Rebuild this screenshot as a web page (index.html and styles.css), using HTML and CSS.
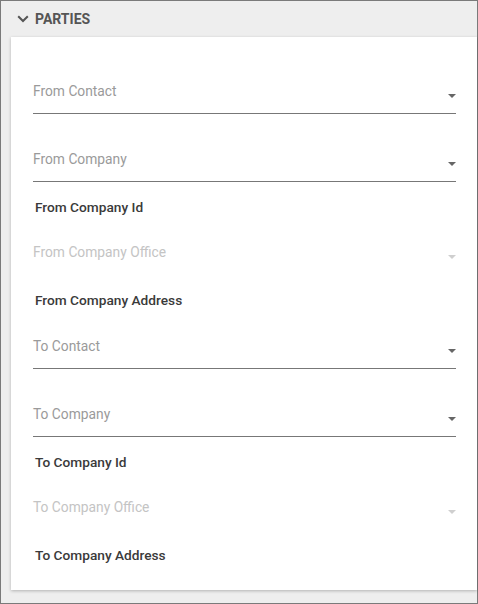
FILE: index.html
```html
<!DOCTYPE html>
<html>
<head>
<meta charset="utf-8">
<link rel="stylesheet" href="styles.css">
</head>
<body>
<div class="frame">
  <div class="header">
    <svg class="chev" width="12" height="8" viewBox="0 0 12 8"><path d="M1.2 1.2 L6 6 L10.8 1.2" fill="none" stroke="#555" stroke-width="2"/></svg>
    <span class="title">PARTIES</span>
  </div>
  <div class="card">
    <div class="group">
      <div class="field"><span class="label">From Contact</span><span class="arrow"></span></div>
      <div class="field"><span class="label">From Company</span><span class="arrow"></span></div>
      <div class="static">From Company Id</div>
      <div class="field disabled"><span class="label">From Company Office</span><span class="arrow"></span></div>
      <div class="static">From Company Address</div>
    </div>
    <div class="group">
      <div class="field"><span class="label">To Contact</span><span class="arrow"></span></div>
      <div class="field"><span class="label">To Company</span><span class="arrow"></span></div>
      <div class="static">To Company Id</div>
      <div class="field disabled"><span class="label">To Company Office</span><span class="arrow"></span></div>
      <div class="static">To Company Address</div>
    </div>
  </div>
</div>
</body>
</html>
```
FILE: styles.css
```css
html, body { margin: 0; padding: 0; }
body { font-family: Roboto, "Liberation Sans", sans-serif; }
.frame {
  width: 478px; height: 604px; box-sizing: border-box;
  border: 1px solid #7a7a7a; background: #eeeeee;
  display: flex; flex-direction: column;
}
.header {
  height: 36px; display: flex; align-items: center;
  padding-left: 16px; gap: 6px; box-sizing: border-box;
}
.chev { display: block; margin-top: -1px; }
.title { font-size: 14px; font-weight: 700; color: #555; }
.card {
  margin-left: 10px; background: #fff;
  box-shadow: 0 1px 3px rgba(0,0,0,0.25);
  padding: 31px 21px 25px 22px;
  display: flex; flex-direction: column; gap: 13px;
}
.group { display: flex; flex-direction: column; }
.field {
  height: 46px; box-sizing: border-box; border-bottom: 1px solid #777;
  position: relative; padding-top: 13px;
}
.field + .field { margin-top: 22px; }
.static + .field { margin-top: 12px; }
.field + .static { margin-top: 15px; }
.field.disabled { border-bottom-color: transparent; }
.label { display: block; font-size: 13.8px; line-height: 20px; color: #9a9a9a; }
.disabled .label { color: #c4c4c4; }
.arrow {
  position: absolute; right: 0; top: 26px; width: 0; height: 0;
  border-left: 4px solid transparent; border-right: 4px solid transparent;
  border-top: 4px solid #666;
}
.disabled .arrow { border-top-color: #cfcfcf; }
.static {
  font-size: 13.7px; line-height: 20px; font-weight: 500; color: #3a3a3a;
  padding-left: 2px; margin-top: 1px;
}
```
